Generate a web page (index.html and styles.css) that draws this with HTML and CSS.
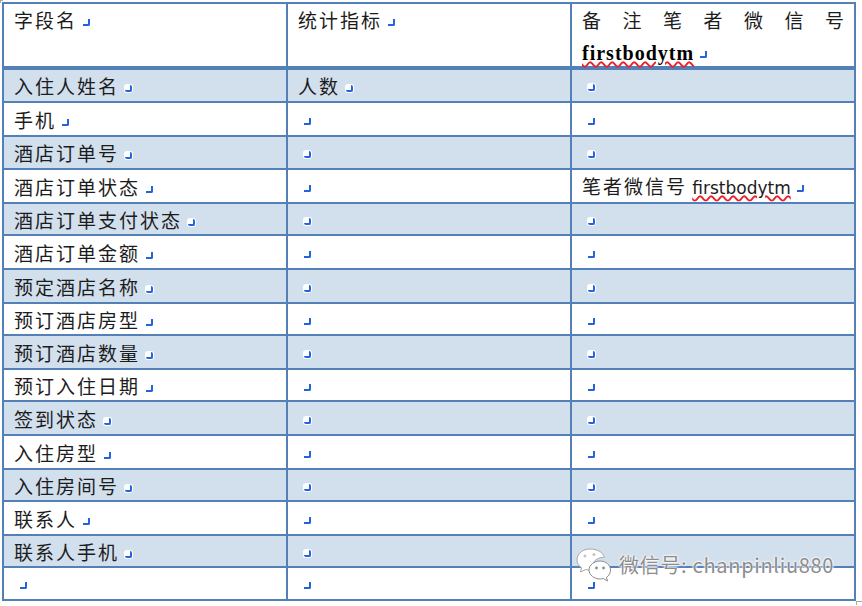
FILE: index.html
```html
<!DOCTYPE html>
<html lang="zh">
<head>
<meta charset="utf-8">
<title>字段表</title>
<link rel="stylesheet" href="styles.css">
</head>
<body>
<main class="page">
<table class="sheet">
<colgroup><col class="c1"><col class="c2"><col class="c3"></colgroup>
<thead>
<tr class="head">
<th>字段名 <i class="pm"></i></th>
<th>统计指标 <i class="pm"></i></th>
<th><span class="just"><span>备</span><span>注</span><span>笔</span><span>者</span><span>微</span><span>信</span><span>号</span></span><span class="bold spell">firstbodytm</span> <i class="pm"></i></th>
</tr>
</thead>
<tbody>
<tr class="alt"><td>入住人姓名 <i class="pm"></i></td><td>人数 <i class="pm"></i></td><td class="blank"><i class="pm"></i></td></tr>
<tr class="tall"><td>手机 <i class="pm"></i></td><td class="blank"><i class="pm"></i></td><td class="blank"><i class="pm"></i></td></tr>
<tr class="alt"><td>酒店订单号 <i class="pm"></i></td><td class="blank"><i class="pm"></i></td><td class="blank"><i class="pm"></i></td></tr>
<tr class="tall"><td>酒店订单状态 <i class="pm"></i></td><td class="blank"><i class="pm"></i></td><td>笔者微信号 <span class="latin spell">firstbodytm</span> <i class="pm"></i></td></tr>
<tr class="alt short"><td>酒店订单支付状态 <i class="pm"></i></td><td class="blank"><i class="pm"></i></td><td class="blank"><i class="pm"></i></td></tr>
<tr class="tall"><td>酒店订单金额 <i class="pm"></i></td><td class="blank"><i class="pm"></i></td><td class="blank"><i class="pm"></i></td></tr>
<tr class="alt tall"><td>预定酒店名称 <i class="pm"></i></td><td class="blank"><i class="pm"></i></td><td class="blank"><i class="pm"></i></td></tr>
<tr class="short"><td>预订酒店房型 <i class="pm"></i></td><td class="blank"><i class="pm"></i></td><td class="blank"><i class="pm"></i></td></tr>
<tr class="alt tall"><td>预订酒店数量 <i class="pm"></i></td><td class="blank"><i class="pm"></i></td><td class="blank"><i class="pm"></i></td></tr>
<tr class="short"><td>预订入住日期 <i class="pm"></i></td><td class="blank"><i class="pm"></i></td><td class="blank"><i class="pm"></i></td></tr>
<tr class="alt tall"><td>签到状态 <i class="pm"></i></td><td class="blank"><i class="pm"></i></td><td class="blank"><i class="pm"></i></td></tr>
<tr class="tall"><td>入住房型 <i class="pm"></i></td><td class="blank"><i class="pm"></i></td><td class="blank"><i class="pm"></i></td></tr>
<tr class="alt short"><td>入住房间号 <i class="pm"></i></td><td class="blank"><i class="pm"></i></td><td class="blank"><i class="pm"></i></td></tr>
<tr class="tall"><td>联系人 <i class="pm"></i></td><td class="blank"><i class="pm"></i></td><td class="blank"><i class="pm"></i></td></tr>
<tr class="alt short"><td>联系人手机 <i class="pm"></i></td><td class="blank"><i class="pm"></i></td><td class="blank"><i class="pm"></i></td></tr>
<tr><td class="blank"><i class="pm"></i></td><td class="blank"><i class="pm"></i></td><td class="blank"><i class="pm"></i></td></tr>
</tbody>
</table>
<aside class="mark">
<svg class="wx" width="36" height="36" viewBox="0 0 36 36" aria-hidden="true">
<path d="M14 2C7 2 1 6.500 1 13c0 3.200 1.800 5.800 4.500 7.800L4.500 25l5.300-2.500c1.400.4 2.800.6 4.200.6 1 0 2-.1 3-.3-.4-1-.6-2-.6-3.100 0-5.300 5-9.300 11-9.300h1C27 5 21 2 14 2z" fill="#fff" stroke="#a8a8a8" stroke-width="1"/>
<path d="M34.500 23c0-5-4.800-9-10.500-9s-11 4-11 9 5.300 9 11 9c1.100 0 2.200-.2 3.200-.5l4.300 2.500-1-3.600c2.500-1.600 4-4.500 4-7.400z" fill="#fff" stroke="#8c8c8c" stroke-width="1"/>
<circle cx="9" cy="9" r="1.500" fill="#c4c4c4"/><circle cx="18" cy="7.500" r="1.500" fill="#c4c4c4"/>
<circle cx="20.500" cy="21" r="1.400" fill="#8c8c8c"/><circle cx="27.500" cy="21" r="1.400" fill="#8c8c8c"/>
</svg>
<span class="wm">微信号: chanpinliu880</span>
</aside>
<span class="tick tick-tl"></span>
<span class="tick tick-br"></span>
</main>
</body>
</html>
```
FILE: styles.css
```css
html, body { margin: 0; padding: 0; background: #fff; }
.page { position: relative; width: 862px; height: 606px; overflow: hidden; padding: 2px 0 0 2px; box-sizing: border-box; }
.sheet { table-layout: fixed; border-collapse: collapse; width: 852px; font: 19px/24px "Noto Sans CJK SC", sans-serif; color: #1c1c1c; letter-spacing: 2px; }
.c1, .c2, .c3 { width: 284px; }
td, th { border: 2px solid #5480b8; padding: 1px 10px 0; text-align: left; font-weight: 400; vertical-align: middle; height: 30px; box-sizing: content-box; white-space: nowrap; }
.head th { height: 65px; border-bottom-width: 4px; vertical-align: top; padding-top: 4px; box-sizing: border-box; }
.head th + th { border-left: 2px solid #000; }
tbody tr:first-child td { border-top-width: 4px; }
.tall td { height: 31px; }
.short td { height: 29px; }
.alt td { background: #d2dfed; }
td.blank { padding-left: 16px; }
.just { display: flex; justify-content: space-between; letter-spacing: 0; margin-bottom: 8px; }
.bold { font: 700 20px/24px "Liberation Serif", serif; letter-spacing: 1px; color: #000; }
.latin { font: 17px/24px "DejaVu Sans", sans-serif; letter-spacing: 0; margin-left: -1px; }
.spell { text-decoration: underline wavy #e8202a 1.5px; text-underline-offset: 1px; }
.pm { display: inline-block; width: 5px; height: 5px; border-right: 2px solid #2563dc; border-bottom: 2px solid #2563dc; border-bottom-right-radius: 2px; vertical-align: 2px; letter-spacing: 0; }
td.blank .pm { vertical-align: 3px; }
.alt .pm { background: #fff; box-shadow: 0 0 0 1px #fff; border-radius: 2px; }
.mark { position: absolute; left: 576px; top: 547px; display: flex; align-items: center; gap: 7px; }
.wm { font: 20px/28px "Noto Sans CJK SC", "DejaVu Sans", sans-serif; color: #8c8c8c; white-space: nowrap; text-shadow: 0 0 2px #fff, 0 0 2px #fff, 0 0 3px #fff; letter-spacing: .7px; }
.tick { position: absolute; width: 5px; height: 3px; border: 0 solid #a8a8a8; }
.tick-tl { left: 0; top: 0; width: 2px; height: 2px; border-width: 1px 0 0 1px; }
.tick-br { right: 0; bottom: 1px; border-width: 1px 0 0 1px; }
```
